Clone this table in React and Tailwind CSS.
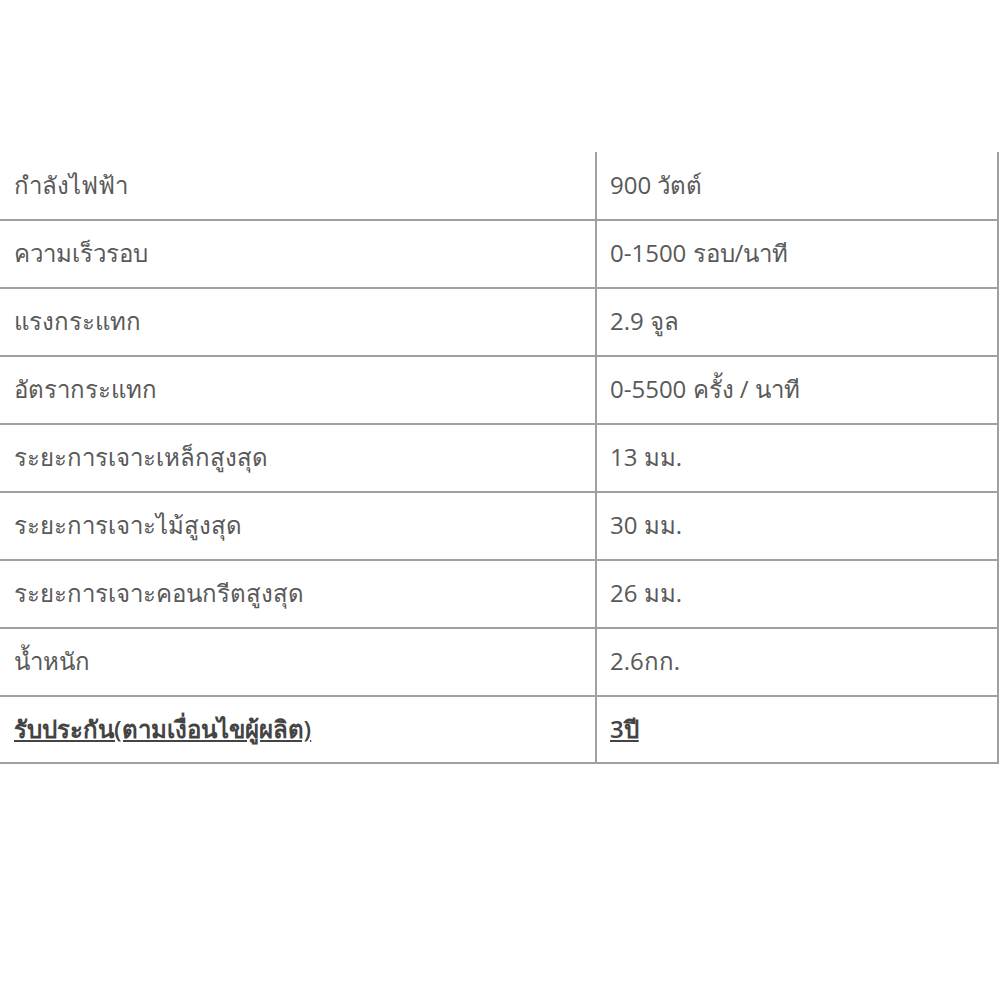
const rows = [
  ["กำลังไฟฟ้า", "900 วัตต์"],
  ["ความเร็วรอบ", "0-1500 รอบ/นาที"],
  ["แรงกระแทก", "2.9 จูล"],
  ["อัตรากระแทก", "0-5500 ครั้ง / นาที"],
  ["ระยะการเจาะเหล็กสูงสุด", "13 มม."],
  ["ระยะการเจาะไม้สูงสุด", "30 มม."],
  ["ระยะการเจาะคอนกรีตสูงสุด", "26 มม."],
  ["น้ำหนัก", "2.6กก."],
];

export default function App() {
  return (
    <div className="w-[1000px] h-[1000px] bg-white pt-[152px] font-['Open_Sans','Noto_Sans',sans-serif] text-[24px] text-[#595959]">
      <table className="w-[999px] border-collapse table-fixed">
        <colgroup>
          <col className="w-[596px]" />
          <col />
        </colgroup>
        <tbody>
          {rows.map(([k, v], i) => (
            <tr key={i} className="h-[68px] border-b-2 border-[#a0a0a0]">
              <td className="px-[14px] pb-[2px] align-middle">{k}</td>
              <td className="px-[13px] pb-[2px] align-middle border-l-2 border-r-2 border-[#a0a0a0]">{v}</td>
            </tr>
          ))}
          <tr className="h-[67px] border-b-2 border-[#a0a0a0]">
            <td className="px-[14px] pb-[2px] align-middle font-semibold underline text-[#444]">
              รับประกัน(ตามเงื่อนไขผู้ผลิต)
            </td>
            <td className="px-[13px] pb-[2px] align-middle border-l-2 border-r-2 border-[#a0a0a0] font-semibold underline text-[#444]">
              3ปี
            </td>
          </tr>
        </tbody>
      </table>
    </div>
  );
}
